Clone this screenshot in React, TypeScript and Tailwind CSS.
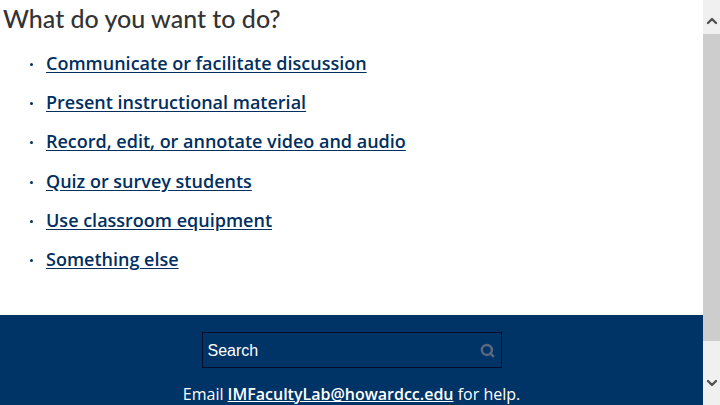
import { ChevronDown, ChevronUp, Search } from 'lucide-react';

const links = [
	'Communicate or facilitate discussion',
	'Present instructional material',
	'Record, edit, or annotate video and audio',
	'Quiz or survey students',
	'Use classroom equipment',
	'Something else'
];

export default function App() {
	return (
		<div className="flex h-[405px] w-[720px] overflow-hidden bg-white font-['Open_Sans',sans-serif]">
			<div className="flex w-[703px] flex-col">
				<h1 className="pl-[3px] pt-[3px] font-['Lato',sans-serif] text-[25px] leading-[30px] font-medium text-[#333]">
					What do you want to do?
				</h1>
				<ul className="flex flex-1 flex-col gap-[11.3px] pl-[46px] pt-[15.8px]">
					{links.map((link) => (
						<li className="relative h-[28px] text-[18px] leading-[28px] font-semibold text-[#012f5f]" key={link}>
							<span className="absolute -left-[16px] top-[14px] size-[3px] rounded-full bg-[#012f5f]" />
							<a href="#" className="underline underline-offset-2">
								{link}
							</a>
						</li>
					))}
				</ul>
				<footer className="flex h-[90px] flex-col items-center bg-[#003366] pt-[17px]">
					<div className="flex h-[36px] w-[300px] shrink-0 items-center justify-between border border-[#050d2a] pl-[5px] pr-[6px] font-['Liberation_Sans',sans-serif] text-[16px] text-white">
						<span className="pt-[1px]">Search</span>
						<Search size={15} strokeWidth={4} className="text-[#5a6a7e]" />
					</div>
					<p className="mt-[14px] shrink-0 text-[16px] leading-[24px] text-white">
						Email{' '}
						<a href="#" className="font-semibold underline">
							IMFacultyLab@howardcc.edu
						</a>{' '}
						for help.
					</p>
				</footer>
			</div>
			<div className="flex w-[17px] flex-col bg-[#f0f0f0]">
				<div className="flex h-[34px] items-end justify-center pb-[5px]">
					<ChevronUp size={16} strokeWidth={3.5} className="text-[#505050]" />
				</div>
				<div className="h-[307px] bg-[#cdcdcd]" />
				<div className="flex flex-1 items-end justify-center pb-[14px]">
					<ChevronDown size={16} strokeWidth={3.5} className="text-[#505050]" />
				</div>
			</div>
		</div>
	);
}
